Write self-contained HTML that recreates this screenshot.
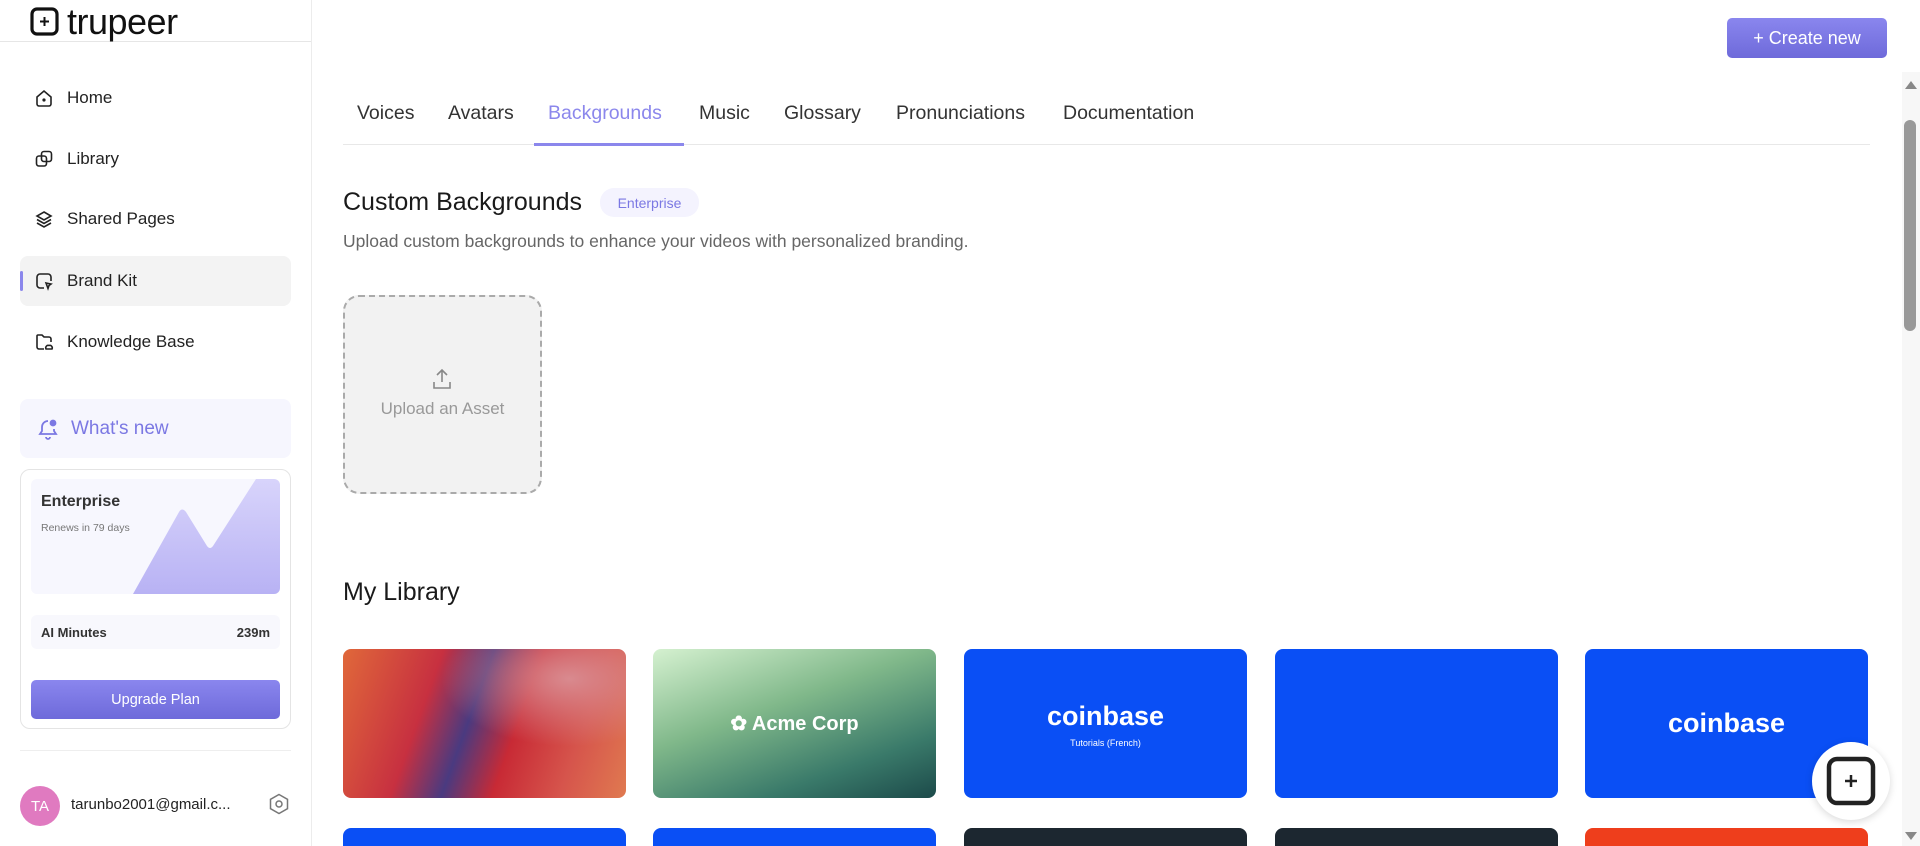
<!DOCTYPE html>
<html><head><meta charset="utf-8"><style>
*{box-sizing:border-box;margin:0;padding:0}
html,body{width:1920px;height:846px;overflow:hidden}
body{background:#fff;font-family:"Liberation Sans",sans-serif;color:#1a1a1a;position:relative}
.abs{position:absolute}
.side{left:0;top:0;width:312px;height:846px;border-right:1px solid #ececec}
.nav{position:absolute;left:20px;width:271px;height:50px;display:flex;align-items:center;padding-left:14px;font-size:17px;color:#222}
.nav svg{margin-right:13px}
.tab{position:absolute;top:102px;font-size:19.5px;color:#333}
.th{position:absolute;width:283px;height:149px;border-radius:8px}
.r2{top:828px;height:18px;border-radius:8px 8px 0 0}
</style></head><body>
<div class="abs side">
  <div class="abs" style="left:0;top:41px;width:311px;border-top:1px solid #e6e6e6"></div>
  <svg class="abs" style="left:30px;top:7px" width="29" height="29" viewBox="0 0 29 29"><rect x="2" y="2" width="25" height="25" rx="5" fill="none" stroke="#111" stroke-width="3.2"/><path d="M14.5 10v9M10 14.5h9" stroke="#111" stroke-width="2"/></svg>
  <div class="abs" style="left:67px;top:1px;font-size:36px;color:#111;letter-spacing:-0.5px">trupeer</div>
  <div class="nav" style="top:73px"><svg width="20" height="20" viewBox="0 0 20 20" fill="none" stroke="#222" stroke-width="1.6"><path d="M3 9l7-6 7 6v7a2 2 0 0 1-2 2H5a2 2 0 0 1-2-2z"/><circle cx="10" cy="12" r=".8" fill="#222"/></svg>Home</div>
  <div class="nav" style="top:134px"><svg width="20" height="20" viewBox="0 0 20 20" fill="none" stroke="#222" stroke-width="1.6"><rect x="2.5" y="7" width="10" height="10" rx="2.5"/><rect x="7.5" y="2.5" width="10" height="10" rx="2.5"/></svg>Library</div>
  <div class="nav" style="top:194px"><svg width="20" height="20" viewBox="0 0 20 20" fill="none" stroke="#222" stroke-width="1.6"><path d="M10 3l7 4-7 4-7-4z M3 10.5l7 4 7-4 M3 14l7 4 7-4"/></svg>Shared Pages</div>
  <div class="nav" style="top:256px;background:#f3f3f3;border-radius:8px"><svg width="20" height="20" viewBox="0 0 20 20" fill="none" stroke="#222" stroke-width="1.6"><path d="M17 10V6a3 3 0 0 0-3-3H6a3 3 0 0 0-3 3v8a3 3 0 0 0 3 3h4"/><path d="M12 12l5 1-2 1.5-1 3z"/></svg>Brand Kit</div>
  <div class="abs" style="left:20px;top:271px;width:3px;height:20px;background:#8b87ec;border-radius:2px"></div>
  <div class="nav" style="top:317px"><svg width="20" height="20" viewBox="0 0 20 20" fill="none" stroke="#222" stroke-width="1.6"><path d="M10 17H5a2 2 0 0 1-2-2V4a1 1 0 0 1 1-1h4l2 2h5a2 2 0 0 1 2 2v3"/><path d="M12 17h6a2.5 2.5 0 0 0-3-3.5 2.5 2.5 0 0 0-3 3.5z"/></svg>Knowledge Base</div>
  <div class="abs" style="left:20px;top:399px;width:271px;height:59px;background:#f6f6fe;border-radius:8px;display:flex;align-items:center;padding-left:16px;font-size:19px;color:#7b78e3"><svg width="24" height="24" viewBox="0 0 24 24" fill="none" stroke="#7b78e3" stroke-width="1.8" style="margin-right:11px"><path d="M12 4a6 6 0 0 0-6 6v4l-2 3h16l-2-3v-2"/><path d="M10 20a2 2 0 0 0 4 0"/><circle cx="17" cy="6" r="2.5" fill="#7b78e3"/></svg>What's new</div>
  <div class="abs" style="left:20px;top:469px;width:271px;height:260px;border:1px solid #e4e4e4;border-radius:10px"></div>
  <div class="abs" style="left:31px;top:479px;width:249px;height:115px;background:#f7f7fe;border-radius:6px;overflow:hidden">
    <svg class="abs" style="left:0;top:0" width="249" height="115"><defs><linearGradient id="g" x1="0" y1="0" x2="0" y2="1"><stop offset="0" stop-color="#d8d4fb"/><stop offset="1" stop-color="#b8b2f4"/></linearGradient></defs><path d="M102 115L148 33 Q151 28 155 33L176 67Q179 71 182 67L225 0H249V115Z" fill="url(#g)"/></svg>
    <div class="abs" style="left:10px;top:14px;font-size:16px;font-weight:bold;color:#333">Enterprise</div>
    <div class="abs" style="left:10px;top:43px;font-size:10.5px;color:#777">Renews in 79 days</div>
  </div>
  <div class="abs" style="left:31px;top:615px;width:249px;height:34px;background:#f8f8fd;border-radius:6px;font-size:13px;font-weight:bold;color:#333;display:flex;justify-content:space-between;align-items:center;padding:0 10px">AI Minutes<span>239m</span></div>
  <div class="abs" style="left:31px;top:680px;width:249px;height:39px;background:linear-gradient(#8a86ee,#6e6ada);border-radius:5px;color:#fff;font-size:14.5px;display:flex;align-items:center;justify-content:center">Upgrade Plan</div>
  <div class="abs" style="left:20px;top:750px;width:271px;border-top:1px solid #eee"></div>
  <div class="abs" style="left:20px;top:786px;width:40px;height:40px;border-radius:50%;background:#e07ac0;color:#fff;font-size:15px;display:flex;align-items:center;justify-content:center">TA</div>
  <div class="abs" style="left:71px;top:796px;font-size:15px;color:#222">tarunbo2001@gmail.c...</div>
  <svg class="abs" style="left:268px;top:793px" width="22" height="22" viewBox="0 0 22 22" fill="none" stroke="#777" stroke-width="1.5"><path d="M11 1.5l8.5 4.8v9.4L11 20.5 2.5 15.7V6.3z"/><circle cx="11" cy="11" r="3"/></svg>
</div>

<div class="abs" style="left:1727px;top:18px;width:160px;height:40px;border-radius:5px;background:linear-gradient(#8a86ee,#6e6ada);color:#fff;font-size:18px;display:flex;align-items:center;justify-content:center">+&nbsp;Create new</div>

<div class="tab" style="left:357px">Voices</div>
<div class="tab" style="left:448px">Avatars</div>
<div class="tab" style="left:548px;color:#8b87ec">Backgrounds</div>
<div class="tab" style="left:699px">Music</div>
<div class="tab" style="left:784px">Glossary</div>
<div class="tab" style="left:896px">Pronunciations</div>
<div class="tab" style="left:1063px">Documentation</div>
<div class="abs" style="left:343px;top:144px;width:1527px;border-top:1px solid #e8e8e8"></div>
<div class="abs" style="left:534px;top:143px;width:150px;height:3px;background:#8b87ec"></div>

<div class="abs" style="left:343px;top:188px;font-size:25px;color:#1a1a1a">Custom Backgrounds</div>
<div class="abs" style="left:600px;top:188px;width:99px;height:29px;border-radius:14px;background:#f4f3fe;color:#7b78e3;font-size:14px;display:flex;align-items:center;justify-content:center">Enterprise</div>
<div class="abs" style="left:343px;top:231px;font-size:17.5px;color:#666">Upload custom backgrounds to enhance your videos with personalized branding.</div>
<div class="abs" style="left:343px;top:295px;width:199px;height:199px;border:2px dashed #aaa;border-radius:16px;background:#f2f2f2"></div>
<svg class="abs" style="left:430px;top:368px" width="24" height="26" viewBox="0 0 24 26" fill="none" stroke="#888" stroke-width="1.6"><path d="M12 14V2M7 7l5-5 5 5M4 14v6h16v-6"/></svg>
<div class="abs" style="left:343px;top:399px;width:199px;text-align:center;font-size:17px;color:#999">Upload an Asset</div>

<div class="abs" style="left:343px;top:578px;font-size:25px;color:#1a1a1a">My Library</div>

<div class="th" style="left:343px;top:649px;background:radial-gradient(ellipse at 80% 20%,#d98a8f,transparent 40%),linear-gradient(110deg,#e0683a 0%,#c73040 30%,#4a3a80 45%,#c82a35 60%,#d6554c 80%,#e07a50 100%)"></div>
<div class="th" style="left:653px;top:649px;background:linear-gradient(160deg,#d5f1d0 0%,#80b88a 40%,#3a7a6a 75%,#1c4a4a 100%);color:#fff;font-size:20px;font-weight:bold;display:flex;align-items:center;justify-content:center">✿ Acme Corp</div>
<div class="th" style="left:964px;top:649px;background:#0a4ff5;color:#fff;text-align:center"><div style="font-size:27px;font-weight:bold;margin-top:52px">coinbase</div><div style="font-size:9px;margin-top:6px">Tutorials (French)</div></div>
<div class="th" style="left:1275px;top:649px;background:#0a4ff5"></div>
<div class="th" style="left:1585px;top:649px;background:#0a4ff5;color:#fff;font-size:27px;font-weight:bold;display:flex;align-items:center;justify-content:center">coinbase</div>
<div class="th r2" style="left:343px;background:#0a4ff5"></div>
<div class="th r2" style="left:653px;background:#0a4ff5"></div>
<div class="th r2" style="left:964px;background:#1c2730"></div>
<div class="th r2" style="left:1275px;background:#1c2730"></div>
<div class="th r2" style="left:1585px;background:#ee3e1c"></div>

<div class="abs" style="left:1812px;top:742px;width:78px;height:78px;border-radius:50%;background:#fff;box-shadow:0 2px 8px rgba(0,0,0,.15)"></div>
<svg class="abs" style="left:1825px;top:755px" width="52" height="52" viewBox="0 0 52 52"><rect x="4" y="4" width="44" height="44" rx="8" fill="none" stroke="#222" stroke-width="4.5"/><path d="M26 20v12M20 26h12" stroke="#222" stroke-width="2.5"/></svg>

<div class="abs" style="left:1902px;top:72px;width:18px;height:774px;background:#f7f7f7"></div>
<div class="abs" style="left:1905px;top:81px;width:0;height:0;border-left:6px solid transparent;border-right:6px solid transparent;border-bottom:8px solid #888"></div>
<div class="abs" style="left:1904px;top:120px;width:12px;height:211px;border-radius:6px;background:#999"></div>
<div class="abs" style="left:1905px;top:832px;width:0;height:0;border-left:6px solid transparent;border-right:6px solid transparent;border-top:8px solid #888"></div>
</body></html>
